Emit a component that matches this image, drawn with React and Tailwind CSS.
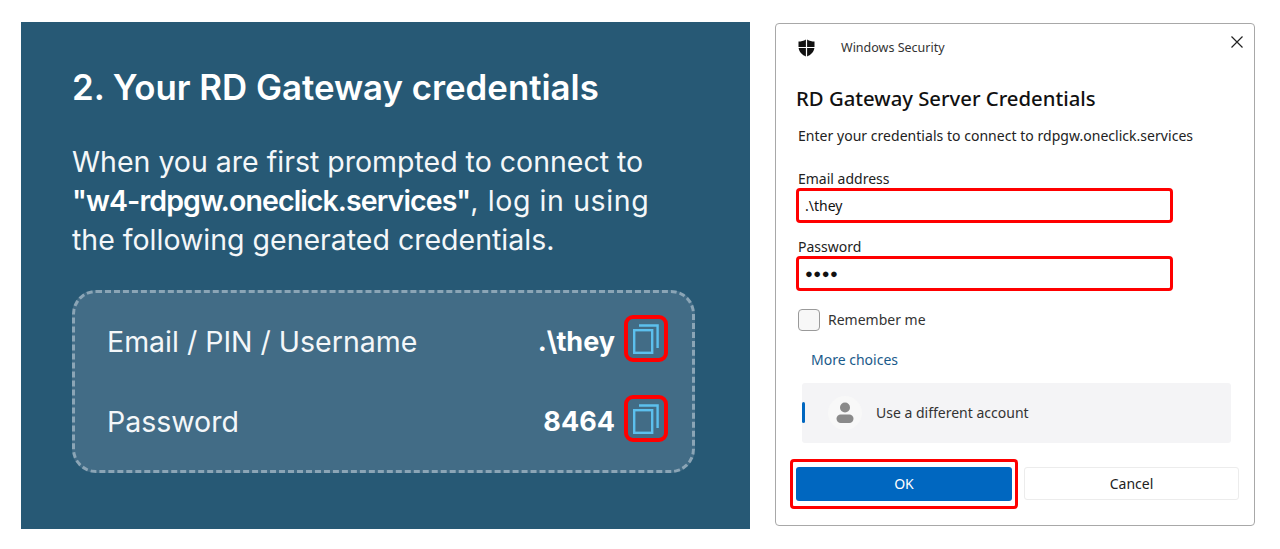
const Copy = () => (
  <svg width="26" height="30" viewBox="0 0 26 30" fill="none" stroke="#5cc0ee" strokeWidth="2.4" className="-ml-[1px]">
    <rect x="1.2" y="6.2" width="18" height="22.6" />
    <path d="M6 1.5H24.6V24" />
  </svg>
);

const CopyBox = () => (
  <div className="flex h-[47px] w-[44px] items-center justify-center rounded-[9px] border-[4px] border-[#ff0000]">
    <Copy />
  </div>
);

const Row = ({ label, value }) => (
  <div className="flex items-center justify-between">
    <span className="pt-[7px] text-[28.5px] leading-[40px] text-[#f4f7f9]">{label}</span>
    <div className="flex items-center gap-[9px]">
      <span className="pt-[7px] text-[27px] leading-[40px] font-bold text-white">{value}</span>
      <CopyBox />
    </div>
  </div>
);

const Field = ({ label, children, mt }) => (
  <div className={mt}>
    <div className="pl-[2px] text-[14px] leading-[18px] text-[#222]">{label}</div>
    <div className="flex h-[35px] w-[377px] items-center rounded-[4px] border-[3px] border-[#ff0000] bg-white pl-[6px] text-[14px] text-[#111]">
      {children}
    </div>
  </div>
);

export default function App() {
  return (
    <div className="flex h-[549px] w-[1280px] items-start gap-[25px] bg-white pt-[22px] pl-[21px]">
      <div className="h-[507px] w-[729px] bg-[#275975] pt-[41px] pr-[56px] pl-[51px] font-['Inter',sans-serif] text-white">
        <h1 className="text-[34.8px] leading-[48px] font-semibold">2. Your RD Gateway credentials</h1>
        <p className="mt-[31px] text-[28.5px] leading-[39px] whitespace-nowrap text-[#f4f7f9]">
          When you are first prompted to connect to
          <br />
          <b className="font-semibold tracking-[-0.9px] text-white">"w4-rdpgw.oneclick.services"</b>
          <span className="tracking-[0.6px]">, log in using</span>
          <br />
          the following generated credentials.
        </p>
        <div className="mt-[31px] flex h-[183px] w-[623px] flex-col justify-center gap-[33px] rounded-[24px] border-[3px] border-dashed border-[#8ba5b6] bg-[#426c86] pr-[24px] pb-[6px] pl-[32px]">
          <Row label="Email / PIN / Username" value=".\they" />
          <Row label="Password" value="8464" />
        </div>
      </div>

      <div className="mt-[1px] h-[503px] w-[480px] rounded-[4px] border border-[#a8a8a8] bg-white font-['Noto_Sans',sans-serif]">
        <div className="flex items-start justify-between pt-[11px] pr-[10px] pl-[22px]">
          <div className="flex items-center gap-[26px] pt-[4px]">
            <svg width="17" height="18" viewBox="0 0 17 18" fill="#111">
              <path d="M7.9 0.5C5.6 2 3 2.6 0.5 2.6V7.9H7.9ZM9.1 0.5C11.4 2 14 2.6 16.5 2.6V7.9H9.1ZM0.6 9.1H7.9V17.5C4.4 16.2 1.3 13.4 0.6 9.1ZM9.1 9.1H16.4C15.7 13.4 12.6 16.2 9.1 17.5Z" />
            </svg>
            <span className="text-[12.5px] text-[#333]">Windows Security</span>
          </div>
          <svg width="14" height="14" viewBox="0 0 14 14" stroke="#222" strokeWidth="1.2">
            <path d="M1.5 1.5L12.5 12.5M12.5 1.5L1.5 12.5" />
          </svg>
        </div>

        <div className="pl-[20px]">
          <h2 className="mt-[26px] text-[20.3px] leading-[28px] font-medium text-[#111]">RD Gateway Server Credentials</h2>
          <p className="mt-[14px] pl-[2px] text-[14px] leading-[20px] tracking-[0.03px] text-[#222]">
            Enter your credentials to connect to rdpgw.oneclick.services
          </p>
          <Field label="Email address" mt="mt-[24px]">.\they</Field>
          <Field label="Password" mt="mt-[15px]">
            <span className="text-[13px] leading-none font-bold tracking-[0.5px]">●●●●</span>
          </Field>
          <label className="mt-[18px] flex items-center gap-[8px] pl-[2px]">
            <span className="h-[22px] w-[22px] rounded-[4px] border border-[#9a9a9a] bg-[#f7f7f7]" />
            <span className="text-[14px] text-[#333]">Remember me</span>
          </label>
          <div className="mt-[19px] pl-[15px] text-[14px] leading-[20px] text-[#1a5a8a]">More choices</div>
        </div>

        <div className="mt-[13px] ml-[26px] flex h-[60px] w-[429px] items-center rounded-[3px] bg-[#f4f4f6]">
          <span className="h-[21px] w-[3px] rounded-full bg-[#0067c0]" />
          <span className="ml-[23px] flex h-[34px] w-[34px] items-center justify-center rounded-full bg-[#f8f8f8]">
            <svg width="18" height="21" viewBox="0 0 18 21" fill="#8a8a8a">
              <circle cx="9" cy="5.5" r="5" />
              <rect x="0.5" y="12.5" width="17" height="8.5" rx="4.2" />
            </svg>
          </span>
          <span className="ml-[14px] text-[14px] text-[#333]">Use a different account</span>
        </div>

        <div className="mt-[16px] ml-[14px] flex items-center gap-[6px]">
          <div className="rounded-[4px] border-[3px] border-[#ff0000] px-[3px] pt-[5px] pb-[5px]">
            <button className="h-[34px] w-[216px] rounded-[3px] bg-[#0067c0] text-[14px] text-white">OK</button>
          </div>
          <button className="h-[33px] w-[215px] rounded-[3px] border border-[#ececec] bg-white text-[14px] text-[#222]">Cancel</button>
        </div>
      </div>
    </div>
  );
}
